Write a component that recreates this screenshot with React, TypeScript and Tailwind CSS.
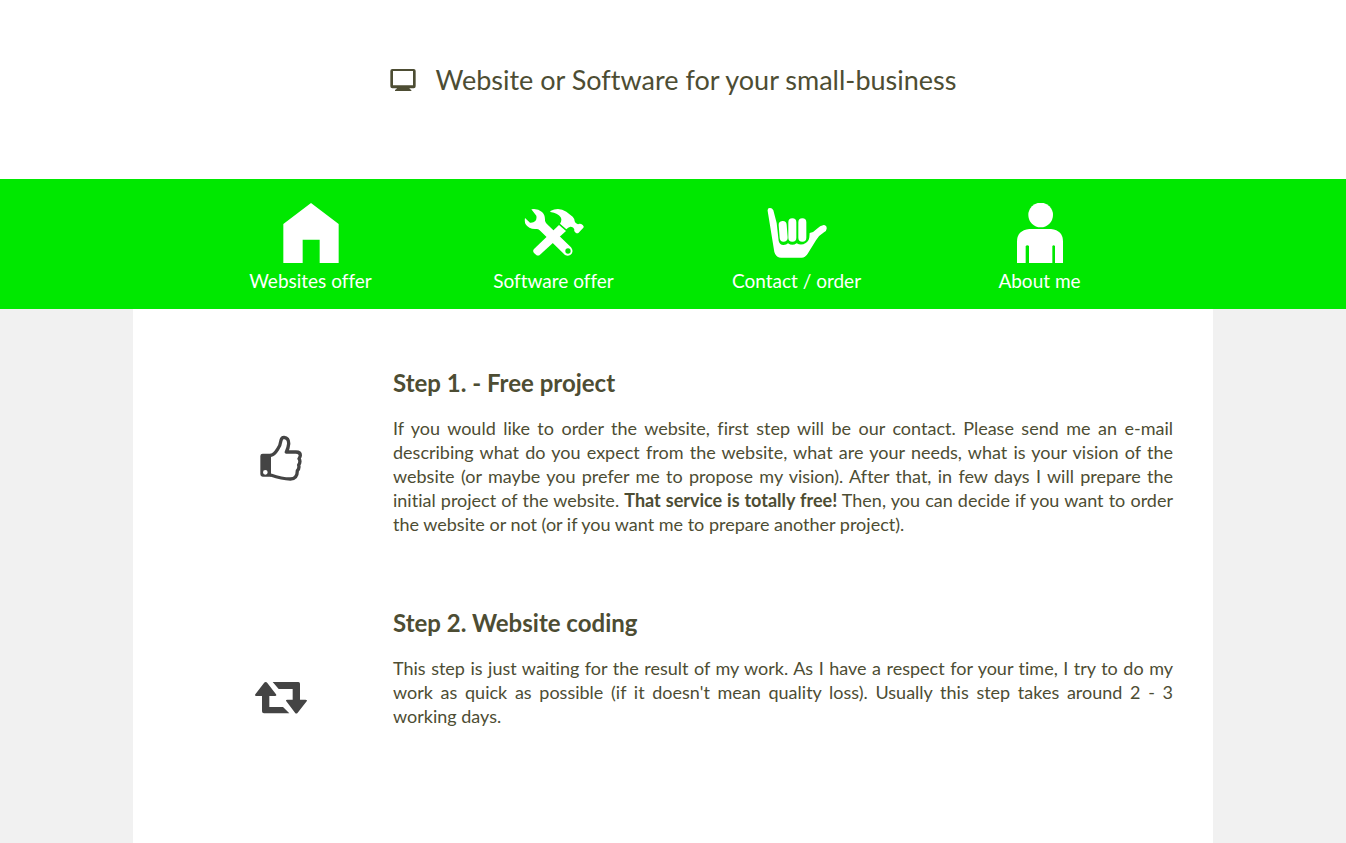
import type { ReactNode } from "react";

function MonitorIcon() {
  return (
    <svg viewBox="0 0 78 66" className="h-[22px] w-[26px] shrink-0" fill="currentColor" aria-hidden="true">
      <path
        fillRule="evenodd"
        d="M7 0h64q6 0 6 6v46q0 6-6 6H58q2 4 6 5v3H15v-3q4-1 6-5H7q-6 0-6-6V6q0-6 6-6zM9 6v43h60V6z"
      />
    </svg>
  );
}

function HouseIcon() {
  return (
    <svg viewBox="123 24 180 180" className="size-[60px]" fill="currentColor" aria-hidden="true">
      <path d="M213 24 296 87V204H239V134H188V204H130V87z" />
    </svg>
  );
}

function ToolsIcon() {
  return (
    <svg viewBox="118 24 180 180" className="size-[60px]" fill="currentColor" aria-hidden="true">
      <path d="M140 43q19-3 32 8 10 9 9 26 1 5 5 9l73 71q8 10 2 19-8 10-20 4L165 106q-5-5-11-4-22 1-31-14-4-7-2-19l15 14q10 1 16-5 5-6 3-16z" />
      <path d="M223 90 244 108 166 179q-6 5-12 0l-6-5q-5-6 0-12z" />
      <path d="M197 48q25-13 48 2l19 15q6 6 6 14 2 8 10 9l5-2q5 0 9 4 5 5 2 8l-14 15q-4 4-9 0-6-5-4-10-3-9-12-8-7 2-12 8l-19-17q7-11 2-19-7-12-31-16z" />
      <circle cx="250" cy="168" r="8" fill="#00e800" />
    </svg>
  );
}

function HandIcon() {
  return (
    <svg viewBox="126 24 180 180" className="size-[60px]" fill="currentColor" aria-hidden="true">
      <path d="M128 48Q127 39 134 39Q141 38 145 46L155 84L161 138Q165 151 176 150Q184 150 189 145Q202 154 215 145Q229 153 242 144Q251 140 253 127L254 114Q267 111 276 101Q285 92 296 90Q305 91 305 99Q306 107 297 112Q283 120 273 136L248 176Q241 188 230 188H168Q153 188 148 171Z" />
      <g stroke="currentColor" strokeWidth="24" strokeLinecap="round">
        <path d="M173 90l3 38M202 82v46M232 82v46" />
      </g>
    </svg>
  );
}

function PersonIcon() {
  return (
    <svg viewBox="60 24 180 180" className="size-[60px]" fill="currentColor" aria-hidden="true">
      <circle cx="152" cy="60" r="37" />
      <path d="M118 102h65q36 4 36 38v64h-24v-51q-4-5-8 0v51h-70v-51q-5-5-10 0v51H81v-64q0-34 37-38z" />
    </svg>
  );
}

function ThumbIcon() {
  return (
    <svg viewBox="33 27 129 141" className="h-[47px] w-[43px]" fill="none" aria-hidden="true">
      <path
        fill="currentColor"
        fillRule="evenodd"
        d="M41 83h25v69H41q-7 0-7-7V90q0-7 7-7zM49 132a7 7 0 1 0 0 14 7 7 0 0 0 0-14z"
      />
      <path
        stroke="currentColor"
        strokeWidth="10"
        strokeLinejoin="round"
        d="M65 88q11-2 20-17 9-12 11-28 2-9 9-9 15 2 14 20-1 12-7 24h29q13 0 13 10 0 5-4 10 6 9-1 19 3 10-4 17 0 24-21 25-25 0-59-12"
      />
    </svg>
  );
}

function RepeatIcon() {
  return (
    <svg viewBox="30 39 156 96" className="h-8 w-[52px]" fill="currentColor" aria-hidden="true">
      <path d="M62 39q3 0 5 3l26 34q3 5-3 5H73v33h41l19 19H57q-6 0-6-6V81H34q-6 0-3-5l26-34q2-3 5-3z" />
      <path d="M83 39h77q5 0 5 5v48h16q7 0 4 5l-27 34q-4 5-8 0L124 97q-3-5 3-5h16V60h-42z" />
    </svg>
  );
}

const links: { label: string; icon: ReactNode }[] = [
  { label: "Websites offer", icon: <HouseIcon /> },
  { label: "Software offer", icon: <ToolsIcon /> },
  { label: "Contact / order", icon: <HandIcon /> },
  { label: "About me", icon: <PersonIcon /> },
];

function Step({ title, icon, children }: { title: string; icon: ReactNode; children: ReactNode }) {
  return (
    <section className="flex items-start gap-1">
      <div className="flex h-[178px] w-[216px] shrink-0 items-center justify-center text-[#444444]">{icon}</div>
      <div className="flex-1">
        <h2 className="text-2xl leading-7 font-bold">{title}</h2>
        <p className="mt-[19px] text-justify text-lg leading-6">{children}</p>
      </div>
    </section>
  );
}

export default function App() {
  return (
    <div className="min-h-screen bg-[#f1f1f1] font-[Lato,sans-serif] text-[#4d4d33] [font-variant-ligatures:none]">
      <header className="flex items-center justify-center gap-5 bg-white pt-[60px] pb-[79px]">
        <MonitorIcon />
        <h1 className="text-[27px] leading-10">Website or Software for your small-business</h1>
      </header>
      <nav className="bg-[#00e800] text-white">
        <ul className="mx-auto grid max-w-[1080px] grid-cols-4 pt-6 pr-[52px] pb-4 pl-14">
          {links.map((link) => (
            <li key={link.label}>
              <a href="#" className="flex flex-col items-center gap-1.5 text-[19px] leading-6">
                {link.icon}
                {link.label}
              </a>
            </li>
          ))}
        </ul>
      </nav>
      <main className="mx-auto flex min-h-[calc(100vh-309px)] max-w-[1080px] flex-col gap-[62px] bg-white px-10 pt-[60px]">
        <Step title="Step 1. - Free project" icon={<ThumbIcon />}>
          If you would like to order the website, first step will be our contact. Please send me an e-mail
          describing what do you expect from the website, what are your needs, what is your vision of the
          website (or maybe you prefer me to propose my vision). After that, in few days I will prepare the
          initial project of the website. <b>That service is totally free!</b> Then, you can decide if you want
          to order the website or not (or if you want me to prepare another project).
        </Step>
        <Step title="Step 2. Website coding" icon={<RepeatIcon />}>
          This step is just waiting for the result of my work. As I have a respect for your time, I try to do my
          work as quick as possible (if it doesn't mean quality loss). Usually this step takes around 2 - 3
          working days.
        </Step>
      </main>
    </div>
  );
}
